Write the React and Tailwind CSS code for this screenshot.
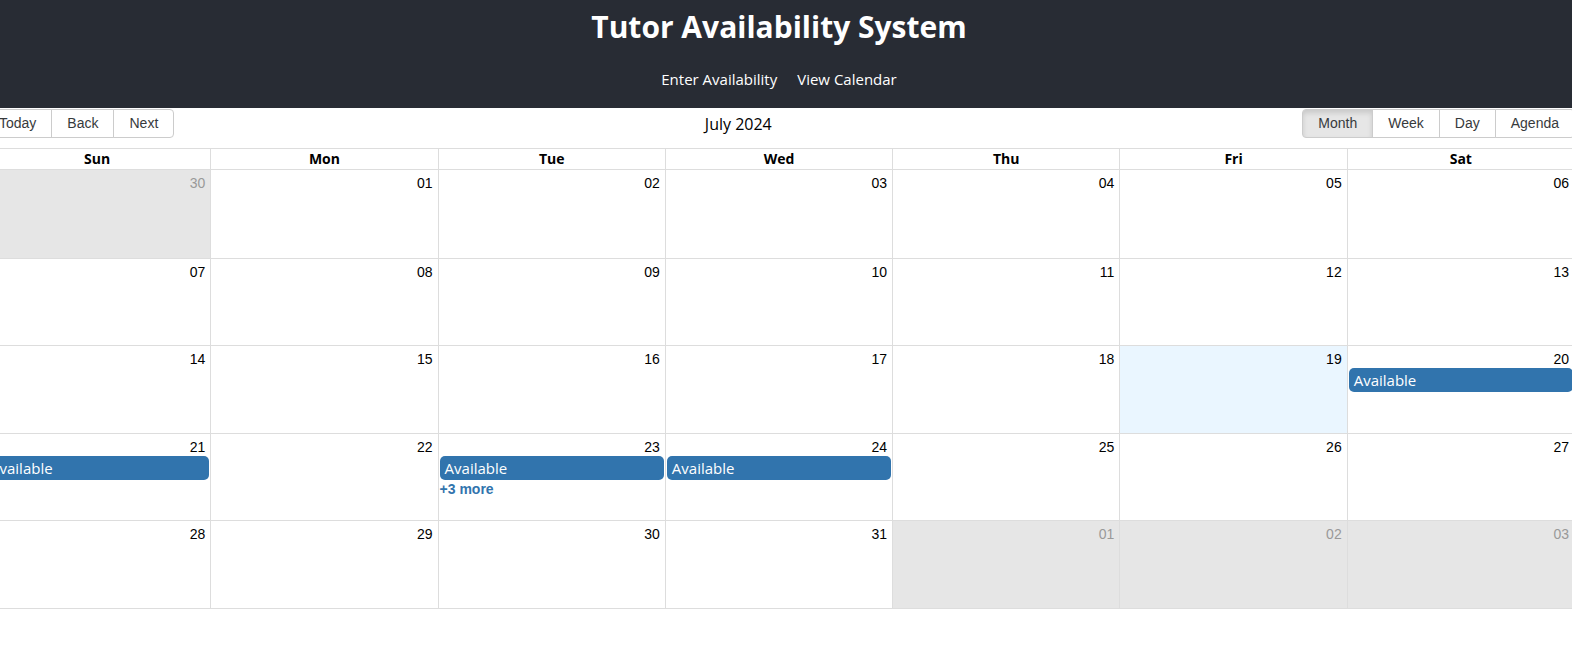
import React from 'react'

const days = ['Sun', 'Mon', 'Tue', 'Wed', 'Thu', 'Fri', 'Sat']

const weeks = [
  [
    { d: '30', off: true },
    { d: '01' },
    { d: '02' },
    { d: '03' },
    { d: '04' },
    { d: '05' },
    { d: '06' },
  ],
  [{ d: '07' }, { d: '08' }, { d: '09' }, { d: '10' }, { d: '11' }, { d: '12' }, { d: '13' }],
  [
    { d: '14' },
    { d: '15' },
    { d: '16' },
    { d: '17' },
    { d: '18' },
    { d: '19', today: true },
    { d: '20', event: true },
  ],
  [
    { d: '21', event: true },
    { d: '22' },
    { d: '23', event: true, more: '+3 more' },
    { d: '24', event: true },
    { d: '25' },
    { d: '26' },
    { d: '27' },
  ],
  [
    { d: '28' },
    { d: '29' },
    { d: '30' },
    { d: '31' },
    { d: '01', off: true },
    { d: '02', off: true },
    { d: '03', off: true },
  ],
]

const segoe = { fontFamily: '"Open Sans", "Noto Sans", sans-serif' }
const arial = { fontFamily: '"Liberation Sans", Arial, sans-serif' }

function ToolButton({ children, active, first, last }) {
  return (
    <button
      type="button"
      className={`h-[29px] px-[15px] text-[14px] text-[#373a3c] border border-[#ccc] -ml-px ${
        first ? 'rounded-l-[4px] ml-0' : ''
      } ${last ? 'rounded-r-[4px]' : ''} ${
        active ? 'bg-[#e6e6e6] shadow-[inset_0_3px_5px_rgba(0,0,0,0.125)] border-[#adadad]' : 'bg-white'
      }`}
    >
      {children}
    </button>
  )
}

function Cell({ cell, first }) {
  return (
    <div
      className={`flex-1 min-w-0 flex flex-col ${first ? '' : 'border-l border-[#ddd]'} ${
        cell.off ? 'bg-[#e6e6e6]' : cell.today ? 'bg-[#eaf6ff]' : 'bg-white'
      }`}
    >
      <div
        className={`text-right pr-[5px] pt-[5px] h-[22px] text-[14px] leading-[16px] ${
          cell.off ? 'text-[#999]' : 'text-black'
        }`}
        style={arial}
      >
        {cell.d}
      </div>
      {cell.event && (
        <div
          className="mx-px h-[24px] rounded-[5px] bg-[#3174ad] text-white text-[15px] leading-[24px] px-[5px] whitespace-nowrap overflow-hidden"
          style={segoe}
        >
          Available
        </div>
      )}
      {cell.more && (
        <div className="text-[#3174ad] font-bold text-[14px] leading-[16px] mt-[1px] pl-px" style={arial}>
          {cell.more}
        </div>
      )}
    </div>
  )
}

export default function App() {
  return (
    <div className="w-[1572px] overflow-hidden bg-white">
      <div className="-ml-[17px] w-[1592px]">
        <header className="bg-[#282c34] h-[108px] flex flex-col items-center text-white" style={segoe}>
          <h1 className="text-[30px] font-bold leading-[42px] mt-[6px]">Tutor Availability System</h1>
          <nav className="flex gap-5 mt-[21px] text-[15px] leading-[20px]">
            <span>Enter Availability</span>
            <span>View Calendar</span>
          </nav>
        </header>

        <div className="flex items-center mb-[10px] pt-px" style={arial}>
          <div className="flex">
            <ToolButton first>Today</ToolButton>
            <ToolButton>Back</ToolButton>
            <ToolButton last>Next</ToolButton>
          </div>
          <div className="flex-1 text-center text-[16px] text-black" style={segoe}>
            July 2024
          </div>
          <div className="flex">
            <ToolButton first active>
              Month
            </ToolButton>
            <ToolButton>Week</ToolButton>
            <ToolButton>Day</ToolButton>
            <ToolButton last>Agenda</ToolButton>
          </div>
        </div>

        <div className="border border-[#ddd]">
          <div className="flex border-b border-[#ddd]">
            {days.map((day, i) => (
              <div
                key={day}
                className={`flex-1 text-center font-bold text-[14px] leading-[20px] text-black ${
                  i === 0 ? '' : 'border-l border-[#ddd]'
                }`}
                style={segoe}
              >
                {day}
              </div>
            ))}
          </div>
          {weeks.map((week, wi) => (
            <div key={wi} className={`flex h-[87.5px] ${wi === 0 ? '' : 'border-t border-[#ddd]'}`}>
              {week.map((cell, ci) => (
                <Cell key={ci} cell={cell} first={ci === 0} />
              ))}
            </div>
          ))}
        </div>
      </div>
    </div>
  )
}
